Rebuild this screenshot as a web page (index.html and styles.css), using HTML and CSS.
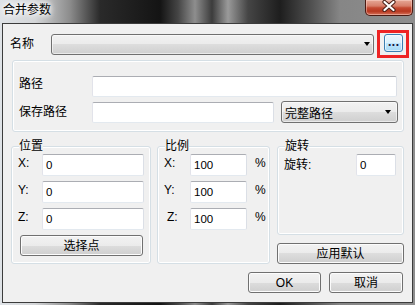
FILE: index.html
```html
<!DOCTYPE html>
<html lang="zh-CN">
<head>
<meta charset="utf-8">
<title>合并参数</title>
<link rel="stylesheet" href="styles.css">
</head>
<body>
<div class="window">
  <div class="titlebar">
    <span class="title">合并参数</span>
    <div class="close">
      <svg width="14" height="12" viewBox="0 0 14 12">
        <path d="M2.5 2 L11.5 10 M11.5 2 L2.5 10" stroke="#4a2018" stroke-width="4.2" stroke-linecap="round"/>
        <path d="M2.5 2 L11.5 10 M11.5 2 L2.5 10" stroke="#ffffff" stroke-width="2.2" stroke-linecap="round"/>
      </svg>
    </div>
  </div>
  <div class="client">
    <div class="name-row">
      <span class="lbl name-lbl">名称</span>
      <div class="combo name-combo"><span></span><span class="arrow"></span></div>
      <div class="highlight"><div class="dots-btn">...</div></div>
    </div>

    <div class="group path-group">
      <div class="path-row first">
        <span class="lbl path-lbl">路径</span>
        <div class="input path-input"></div>
      </div>
      <div class="path-row second">
        <span class="lbl path-lbl">保存路径</span>
        <div class="input save-input"></div>
        <div class="combo full-combo"><span>完整路径</span><span class="arrow"></span></div>
      </div>
    </div>

    <div class="lower">
      <div class="group pos-group">
        <div class="gtitle">位置</div>
        <div class="xyz-row first"><span class="lbl axis">X:</span><div class="input pos-input">0</div></div>
        <div class="xyz-row"><span class="lbl axis">Y:</span><div class="input pos-input">0</div></div>
        <div class="xyz-row"><span class="lbl axis">Z:</span><div class="input pos-input">0</div></div>
        <div class="btn pick-btn">选择点</div>
      </div>

      <div class="group scale-group">
        <div class="gtitle">比例</div>
        <div class="xyz-row first"><span class="lbl axis s-axis">X:</span><div class="input scale-input">100</div><span class="lbl pct">%</span></div>
        <div class="xyz-row"><span class="lbl axis s-axis">Y:</span><div class="input scale-input">100</div><span class="lbl pct">%</span></div>
        <div class="xyz-row"><span class="lbl axis s-axis z-axis">Z:</span><div class="input scale-input">100</div><span class="lbl pct">%</span></div>
      </div>

      <div class="rcol">
        <div class="group rot-group">
          <div class="gtitle">旋转</div>
          <div class="xyz-row first rot-row"><span class="lbl rot-lbl">旋转:</span><div class="input rot-input">0</div></div>
        </div>
        <div class="btn default-btn">应用默认</div>
      </div>
    </div>

    <div class="footer">
      <div class="btn ok-btn">OK</div>
      <div class="btn cancel-btn">取消</div>
    </div>
  </div>
</div>
</body>
</html>
```

FILE: styles.css
```css
html, body {
  margin: 0;
  padding: 0;
}

body {
  width: 415px;
  height: 305px;
  overflow: hidden;
  font-family: "Liberation Sans", "Noto Sans CJK SC", sans-serif;
  font-size: 12px;
  color: #000;
}

.window {
  width: 415px;
  height: 305px;
  display: flex;
  flex-direction: column;
  background:
    linear-gradient(to right, #dfe3e7 0, #d4d6d8 35px, #8c8c8c 70px, #2a2a2a 100px, #141414 160px, #454545 178px, #8e8e8e 195px, #3c3c3c 212px, #9a9a9a 228px, #454545 248px, #1e1e1e 280px, #4e4e4e 310px, #868686 340px, #8e8e8e 415px);
}

.titlebar {
  height: 23px;
  flex: none;
  display: flex;
  align-items: flex-start;
}

.title {
  padding: 3px 0 0 3px;
  line-height: 14px;
  font-size: 12px;
  text-shadow: 0 0 4px #fff, 0 0 6px #fff, 0 0 8px #fff;
}

.close {
  margin-left: auto;
  margin-right: 2px;
  width: 48px;
  height: 16px;
  box-sizing: border-box;
  border: 1px solid #4a1a12;
  border-top: none;
  border-radius: 0 0 5px 5px;
  background: linear-gradient(#e6a896 0%, #d77e69 40%, #c44a32 52%, #b83820 75%, #d6735b 100%);
  box-shadow: inset 0 0 0 1px rgba(255, 220, 210, 0.45);
  display: flex;
  justify-content: center;
  align-items: flex-start;
}

.client {
  margin: 0 2px;
  height: 280px;
  box-sizing: border-box;
  border: 1px solid #3c3c3c;
  background: #f0f0f0;
  display: flex;
  flex-direction: column;
}

.lbl {
  line-height: 14px;
  white-space: nowrap;
}

/* name row */
.name-row {
  display: flex;
  align-items: center;
  height: 28px;
  margin-top: 6px;
  padding-left: 7px;
}

.name-lbl {
  width: 41px;
  flex: none;
}

.combo {
  box-sizing: border-box;
  border: 1px solid #707070;
  border-radius: 3px;
  background: linear-gradient(#f2f2f2 0%, #ebebeb 50%, #dddddd 50%, #cfcfcf 100%);
  box-shadow: inset 0 0 0 1px rgba(255, 255, 255, 0.55);
  display: flex;
  align-items: center;
  justify-content: space-between;
  flex: none;
}

.arrow {
  width: 0;
  height: 0;
  border-left: 3.5px solid transparent;
  border-right: 3.5px solid transparent;
  border-top: 4px solid #000;
}

.name-combo {
  width: 323px;
  height: 21px;
  padding: 0 3px 0 3px;
}

.highlight {
  margin-left: 3px;
  width: 32px;
  height: 28px;
  box-sizing: border-box;
  border: 3px solid #ee2424;
  display: flex;
  align-items: flex-start;
  flex: none;
}

.dots-btn {
  margin: 1px 0 0 4px;
  width: 19px;
  height: 18px;
  box-sizing: border-box;
  border: 1px solid #3c7fb1;
  border-radius: 3px;
  background: linear-gradient(#eaf6fd 0%, #d9f0fc 50%, #bee6fd 50%, #a7d9f5 100%);
  box-shadow: inset 0 0 0 1px rgba(255, 255, 255, 0.6);
  font-family: "DejaVu Sans", sans-serif;
  font-size: 10px;
  font-weight: bold;
  line-height: 10px;
  text-align: center;
  color: #1a1a40;
  letter-spacing: 0;
  padding-top: 3px;
}

/* groups */
.group {
  box-sizing: border-box;
  border: 1px solid #d5dfe5;
  border-radius: 3px;
  box-shadow: inset 0 0 0 1px #ffffff;
  flex: none;
}

.path-group {
  margin: 2px 0 0 9px;
  width: 392px;
  height: 72px;
  padding: 15px 0 0 6px;
}

.path-row {
  display: flex;
  align-items: center;
}

.path-row.first {
  height: 21px;
  align-items: flex-start;
}

.path-row.first .path-lbl {
  padding-top: 1px;
}

.path-row.second {
  height: 22px;
  margin-top: 4px;
}

.path-lbl {
  width: 73px;
  flex: none;
}

.input {
  box-sizing: border-box;
  background: #fff;
  border: 1px solid;
  border-color: #abadb3 #dbdfe6 #e3e9ef #e2e3ea;
  border-radius: 2px;
  display: flex;
  align-items: center;
  padding-left: 3px;
  font-size: 11.5px;
  flex: none;
}

.path-input {
  width: 305px;
  height: 21px;
}

.save-input {
  width: 182px;
  height: 21px;
}

.full-combo {
  margin-left: 7px;
  width: 117px;
  height: 22px;
  padding: 0 6px 0 3px;
}

/* lower */
.lower {
  display: flex;
  align-items: flex-start;
  margin: 14px 0 0 8px;
}

.gtitle {
  margin-top: -7px;
  margin-left: 1px;
  line-height: 12px;
  height: 12px;
  width: fit-content;
  background: #f0f0f0;
}

.pos-group,
.scale-group,
.rot-group {
  padding-left: 6px;
}

.pos-group {
  width: 140px;
  height: 118px;
}

.scale-group {
  margin-left: 6px;
  width: 113px;
  height: 118px;
}

.rcol {
  margin-left: 7px;
  width: 127px;
  display: flex;
  flex-direction: column;
}

.rot-group {
  width: 127px;
  height: 89px;
}

.xyz-row {
  display: flex;
  align-items: flex-start;
  height: 22px;
  margin-top: 5px;
}

.xyz-row.first {
  margin-top: 2px;
}

.axis {
  padding-top: 2px;
  flex: none;
}

.pos-group .axis {
  width: 24px;
}

.pos-input {
  width: 102px;
  height: 22px;
}

.s-axis {
  width: 26px;
}

.z-axis {
  width: 23px;
  padding-left: 3px;
}

.scale-input {
  width: 57px;
  height: 22px;
}

.pct {
  margin-left: 8px;
  padding-top: 2px;
}

.rot-row {
  align-items: center;
}

.rot-lbl {
  width: 72px;
  flex: none;
}

.rot-input {
  width: 40px;
  height: 22px;
}

/* buttons */
.btn {
  box-sizing: border-box;
  border: 1px solid #707070;
  border-radius: 3px;
  background: linear-gradient(#f2f2f2 0%, #ebebeb 50%, #dddddd 50%, #cfcfcf 100%);
  box-shadow: inset 0 0 0 1px #fcfcfc;
  display: flex;
  align-items: center;
  justify-content: center;
  line-height: 14px;
  flex: none;
}

.pick-btn {
  margin: 5px 0 0 2px;
  width: 123px;
  height: 21px;
}

.default-btn {
  margin-top: 8px;
  width: 127px;
  height: 21px;
}

.footer {
  display: flex;
  justify-content: flex-end;
  gap: 8px;
  margin-top: 8px;
  padding-right: 9px;
}

.ok-btn {
  width: 73px;
  height: 21px;
}

.cancel-btn {
  width: 74px;
  height: 21px;
}
```
